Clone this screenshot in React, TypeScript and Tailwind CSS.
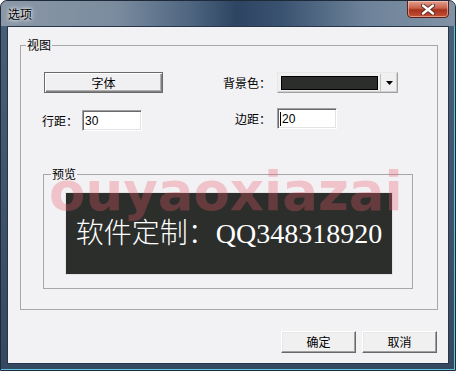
import React from "react";

const btn3d =
  "flex items-center justify-center bg-[#f0f0f0] border border-t-white border-l-white border-r-[#696969] border-b-[#696969] shadow-[inset_-1px_-1px_0_#a0a0a0,inset_1px_1px_0_#e8e8e8] text-[12px] text-black";

const sunken =
  "bg-white border border-t-[#a0a0a0] border-l-[#a0a0a0] border-r-white border-b-white shadow-[inset_1px_1px_0_#696969,inset_-1px_-1px_0_#e3e3e3] flex items-center text-[12px] text-black font-['Liberation_Sans',sans-serif] pl-[2px]";

export default function App() {
  return (
    <div className="w-[456px] h-[371px] relative overflow-hidden rounded-t-[7px] border border-[#1e2a39] bg-gradient-to-b from-[#4a6079] to-[#34495f] font-['Noto_Sans_CJK_SC',sans-serif] shadow-[inset_-1px_-1px_0_#5fc3e4]">
      {/* title bar */}
      <div className="h-[25px] flex justify-between bg-[linear-gradient(90deg,#8a97a6_0%,#7b8c9f_25%,#4e6580_42%,#2d4462_52%,#3a5371_62%,#6d8299_80%,#8192a5_100%)]">
        <div className="pl-[7px] flex items-center text-[12px] text-black [text-shadow:0_0_6px_#ffffff,0_0_3px_#ffffff]">
          选项
        </div>
        <div className="mr-[6px] -mt-px w-[42px] h-[18px] rounded-b-[4px] border border-[#5a2218] bg-[linear-gradient(180deg,#e2a090_0%,#c8604a_45%,#a8321c_55%,#c45236_100%)] shadow-[inset_0_0_0_1px_rgba(255,220,210,0.5)] flex items-center justify-center">
          <svg width="14" height="11" viewBox="0 0 14 11">
            <path d="M2 1.5 L12 9.5 M12 1.5 L2 9.5" stroke="#5a2a22" strokeWidth="4.2" strokeLinecap="round" />
            <path d="M2 1.5 L12 9.5 M12 1.5 L2 9.5" stroke="#ffffff" strokeWidth="2.4" strokeLinecap="round" />
          </svg>
        </div>
      </div>

      {/* client area */}
      <div className="ml-[6px] w-[442px] h-[338px] border border-[#27364a] bg-[#f2f1f4] flex flex-col">
        {/* 视图 group */}
        <div className="relative ml-[12px] mt-[18px] w-[418px] h-[265px] border border-[#a7a6aa] flex flex-col">
          <span className="absolute left-[5px] -top-[9px] px-[1px] bg-[#f2f1f4] text-[12px] leading-[16px] text-black">
            视图
          </span>

          {/* row 1 */}
          <div className="flex items-center mt-[26px] pl-[23px]">
            <div className="w-[119px] h-[21px] flex items-center justify-center bg-[#f0eff1] border border-[#6a6a6a] shadow-[inset_1px_1px_0_#ffffff,inset_-1px_-1px_0_#808080,inset_-2px_-2px_0_#b0b0b0] text-[12px] text-black">
              字体
            </div>
            <div className="ml-[60px] w-[54px] text-[12px] text-black">背景色：</div>
            <div className="w-[121px] h-[21px] flex items-center bg-[#f0f0f0] border border-t-[#e8e8e8] border-l-[#e8e8e8] border-r-[#a0a0a0] border-b-[#a0a0a0] shadow-[inset_-1px_-1px_0_#d0d0d0]">
              <div className="ml-[3px] w-[97px] h-[14px] border border-black bg-[#2c2e2b]" />
              <div className="ml-[2px] w-px h-[17px] bg-[#c0c0c0]" />
              <div className="flex-1 flex items-center justify-center">
                <svg width="7" height="4" viewBox="0 0 7 4">
                  <path d="M0 0 H7 L3.5 4 Z" fill="#000" />
                </svg>
              </div>
            </div>
          </div>

          {/* row 2 */}
          <div className="flex items-start mt-[15px]">
            <div className="mt-[2px] ml-[21px] flex items-center">
              <div className="w-[40px] text-[12px] text-black">行距：</div>
              <div className={`w-[60px] h-[21px] ${sunken}`}>30</div>
            </div>
            <div className="ml-[93px] flex items-center">
              <div className="w-[42px] text-[12px] text-black">边距：</div>
              <div className={`w-[60px] h-[21px] ${sunken}`}>
                <span className="w-px h-[14px] bg-black mr-[1px]" />
                20
              </div>
            </div>
          </div>

          {/* 预览 group */}
          <div className="relative ml-[22px] mt-[43px] w-[370px] h-[115px] border border-[#a7a6aa] flex flex-col">
            <span className="absolute left-[7px] -top-[9px] px-[1px] bg-[#f2f1f4] text-[12px] leading-[16px] text-black">
              预览
            </span>
            <div className="ml-[21px] mt-[17px] w-[328px] h-[83px] border border-[#e4e4e6] bg-[#2c2e2b] flex items-center justify-center">
              <span className="text-white text-[28px] leading-none font-['Liberation_Serif','Noto_Sans_CJK_SC',serif] font-light">
                软件定制：QQ348318920
              </span>
            </div>
          </div>
        </div>

        {/* bottom buttons */}
        <div className="flex justify-end gap-[6px] mt-[21px] pr-[11px]">
          <div className={`w-[75px] h-[22px] ${btn3d}`}>确定</div>
          <div className={`w-[75px] h-[22px] ${btn3d}`}>取消</div>
        </div>
      </div>

      {/* watermark overlay */}
      <div className="absolute left-[48px] top-[164px] text-[53px] leading-none font-bold font-['DejaVu_Sans',sans-serif] text-[#ea5a6a]/30 pointer-events-none">
        ouyaoxiazai
      </div>
    </div>
  );
}
